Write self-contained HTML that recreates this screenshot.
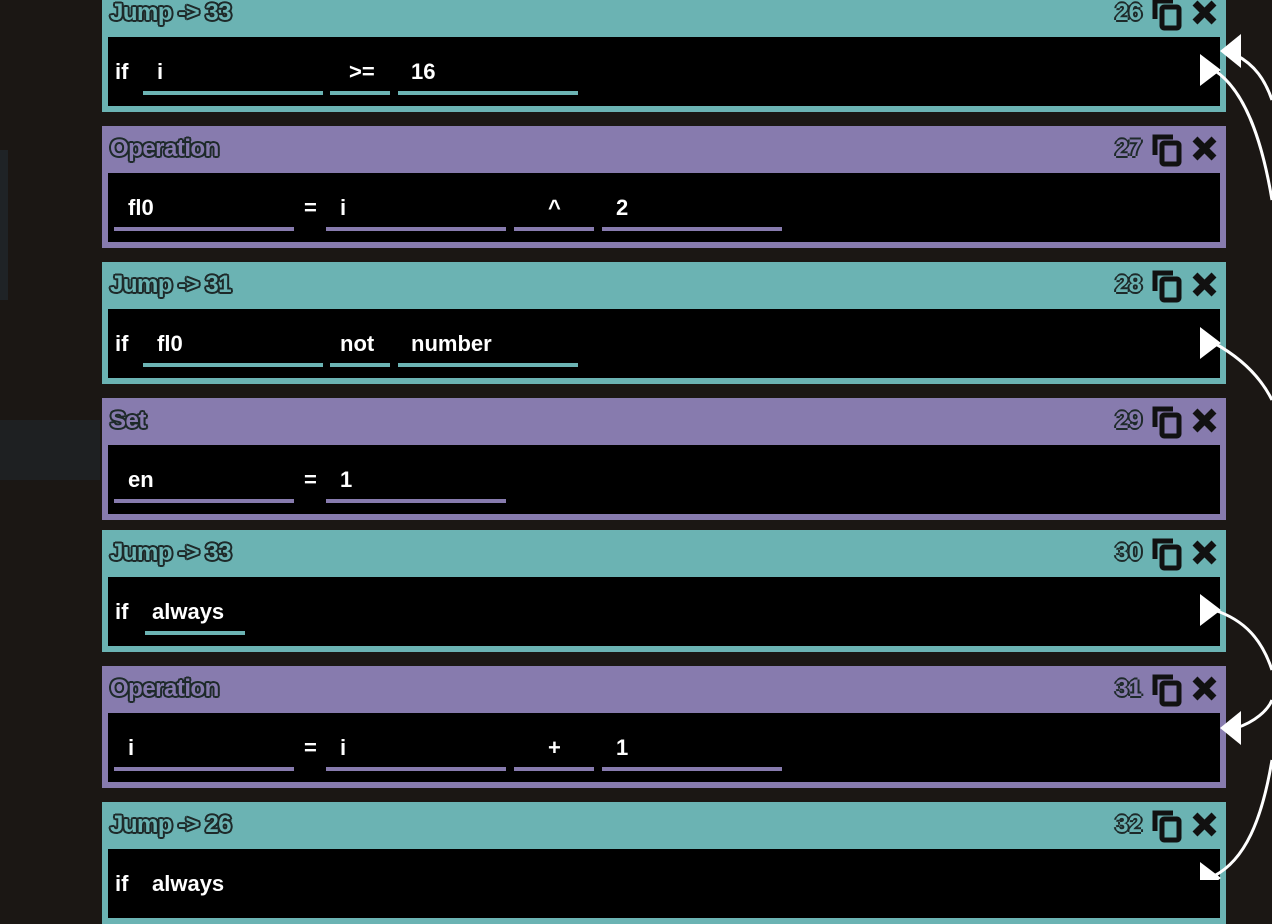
<!DOCTYPE html>
<html><head><style>
body{margin:0;width:1272px;height:880px;overflow:hidden;background:#1b1714;position:relative;font-family:"Liberation Sans",sans-serif}
.b{position:absolute;left:102px;width:1124px;height:122px}
.t{background:#6bb3b3}.p{background:#877bae}
.in{position:absolute;left:6px;right:6px;top:47px;height:69px;background:#000}
.ti{position:absolute;left:8px;top:9px;font-size:24px;font-weight:bold;letter-spacing:-0.5px;text-shadow:-2px 0 #1e2a2a,2px 0 #1e2a2a,0 -2px #1e2a2a,0 2px #1e2a2a,-1.5px -1.5px #1e2a2a,1.5px 1.5px #1e2a2a,-1.5px 1.5px #1e2a2a,1.5px -1.5px #1e2a2a}
.t .ti,.t .n{color:#6bb3b3}.p .ti,.p .n{color:#877bae}
.n{position:absolute;right:84px;top:9px;font-size:24px;font-weight:bold;text-shadow:-2px 0 #1e2a2a,2px 0 #1e2a2a,0 -2px #1e2a2a,0 2px #1e2a2a}
.ic{position:absolute;right:4px;top:4px}
.f{position:absolute;top:54px;height:4px}
.t .f{background:#6bb3b3}.p .f{background:#877bae}
.x{position:absolute;top:22px;color:#fff;font-size:22px;font-weight:bold}
</style></head><body>
<div style="position:absolute;left:0;top:150px;width:8px;height:150px;background:#1f2326"></div>
<div style="position:absolute;left:0;top:420px;width:100px;height:60px;background:#1e2022"></div>

<!-- 26 -->
<div class="b t" style="top:-10px"><div class="ti">Jump -&gt; 33</div><div class="n">26</div>
<svg class="ic" width="72" height="40" viewBox="0 0 72 40"><path d="M5 25V7h18" stroke="#111" stroke-width="5" fill="none"/><rect x="12" y="13" width="17" height="21" rx="2" stroke="#111" stroke-width="5" fill="none"/><path d="M45 9l19 19M64 9L45 28" stroke="#111" stroke-width="7"/></svg>
<div class="in"><span class="x" style="left:7px">if</span><span class="x" style="left:49px">i</span><div class="f" style="left:35px;width:180px"></div><span class="x" style="left:241px">&gt;=</span><div class="f" style="left:222px;width:60px"></div><span class="x" style="left:303px">16</span><div class="f" style="left:290px;width:180px"></div></div></div>

<!-- 27 -->
<div class="b p" style="top:126px"><div class="ti">Operation</div><div class="n">27</div>
<svg class="ic" width="72" height="40" viewBox="0 0 72 40"><path d="M5 25V7h18" stroke="#111" stroke-width="5" fill="none"/><rect x="12" y="13" width="17" height="21" rx="2" stroke="#111" stroke-width="5" fill="none"/><path d="M45 9l19 19M64 9L45 28" stroke="#111" stroke-width="7"/></svg>
<div class="in"><span class="x" style="left:20px">fl0</span><div class="f" style="left:6px;width:180px"></div><span class="x" style="left:196px">=</span><span class="x" style="left:232px">i</span><div class="f" style="left:218px;width:180px"></div><span class="x" style="left:440px">^</span><div class="f" style="left:406px;width:80px"></div><span class="x" style="left:508px">2</span><div class="f" style="left:494px;width:180px"></div></div></div>

<!-- 28 -->
<div class="b t" style="top:262px"><div class="ti">Jump -&gt; 31</div><div class="n">28</div>
<svg class="ic" width="72" height="40" viewBox="0 0 72 40"><path d="M5 25V7h18" stroke="#111" stroke-width="5" fill="none"/><rect x="12" y="13" width="17" height="21" rx="2" stroke="#111" stroke-width="5" fill="none"/><path d="M45 9l19 19M64 9L45 28" stroke="#111" stroke-width="7"/></svg>
<div class="in"><span class="x" style="left:7px">if</span><span class="x" style="left:49px">fl0</span><div class="f" style="left:35px;width:180px"></div><span class="x" style="left:232px">not</span><div class="f" style="left:222px;width:60px"></div><span class="x" style="left:303px">number</span><div class="f" style="left:290px;width:180px"></div></div></div>

<!-- 29 -->
<div class="b p" style="top:398px"><div class="ti">Set</div><div class="n">29</div>
<svg class="ic" width="72" height="40" viewBox="0 0 72 40"><path d="M5 25V7h18" stroke="#111" stroke-width="5" fill="none"/><rect x="12" y="13" width="17" height="21" rx="2" stroke="#111" stroke-width="5" fill="none"/><path d="M45 9l19 19M64 9L45 28" stroke="#111" stroke-width="7"/></svg>
<div class="in"><span class="x" style="left:20px">en</span><div class="f" style="left:6px;width:180px"></div><span class="x" style="left:196px">=</span><span class="x" style="left:232px">1</span><div class="f" style="left:218px;width:180px"></div></div></div>

<!-- 30 -->
<div class="b t" style="top:530px"><div class="ti">Jump -&gt; 33</div><div class="n">30</div>
<svg class="ic" width="72" height="40" viewBox="0 0 72 40"><path d="M5 25V7h18" stroke="#111" stroke-width="5" fill="none"/><rect x="12" y="13" width="17" height="21" rx="2" stroke="#111" stroke-width="5" fill="none"/><path d="M45 9l19 19M64 9L45 28" stroke="#111" stroke-width="7"/></svg>
<div class="in"><span class="x" style="left:7px">if</span><span class="x" style="left:44px">always</span><div class="f" style="left:37px;width:100px"></div></div></div>

<!-- 31 -->
<div class="b p" style="top:666px"><div class="ti">Operation</div><div class="n">31</div>
<svg class="ic" width="72" height="40" viewBox="0 0 72 40"><path d="M5 25V7h18" stroke="#111" stroke-width="5" fill="none"/><rect x="12" y="13" width="17" height="21" rx="2" stroke="#111" stroke-width="5" fill="none"/><path d="M45 9l19 19M64 9L45 28" stroke="#111" stroke-width="7"/></svg>
<div class="in"><span class="x" style="left:20px">i</span><div class="f" style="left:6px;width:180px"></div><span class="x" style="left:196px">=</span><span class="x" style="left:232px">i</span><div class="f" style="left:218px;width:180px"></div><span class="x" style="left:440px">+</span><div class="f" style="left:406px;width:80px"></div><span class="x" style="left:508px">1</span><div class="f" style="left:494px;width:180px"></div></div></div>

<!-- 32 -->
<div class="b t" style="top:802px"><div class="ti">Jump -&gt; 26</div><div class="n">32</div>
<svg class="ic" width="72" height="40" viewBox="0 0 72 40"><path d="M5 25V7h18" stroke="#111" stroke-width="5" fill="none"/><rect x="12" y="13" width="17" height="21" rx="2" stroke="#111" stroke-width="5" fill="none"/><path d="M45 9l19 19M64 9L45 28" stroke="#111" stroke-width="7"/></svg>
<div class="in"><span class="x" style="left:7px">if</span><span class="x" style="left:44px">always</span></div></div>

<svg style="position:absolute;left:0;top:0" width="1272" height="880">
<g fill="none" stroke="#fff" stroke-width="3">
<path d="M1214 70 C1245 90 1262 140 1272 200"/>
<path d="M1236 55 C1255 65 1265 80 1272 100"/>
<path d="M1214 343 C1245 360 1262 380 1272 400"/>
<path d="M1214 610 C1245 620 1262 640 1272 670"/>
<path d="M1236 728 C1255 722 1268 710 1272 700"/>
<path d="M1214 876 C1245 860 1262 820 1272 760"/>
</g>
<g fill="#fff">
<path d="M1200 54l21 16-21 16z"/><path d="M1241 34l-21 17 21 17z"/>
<path d="M1200 327l21 16-21 16z"/><path d="M1200 594l21 16-21 16z"/>
<path d="M1241 711l-21 17 21 17z"/><path d="M1200 862l21 16-21 16z"/>
</g></svg>
</body></html>
